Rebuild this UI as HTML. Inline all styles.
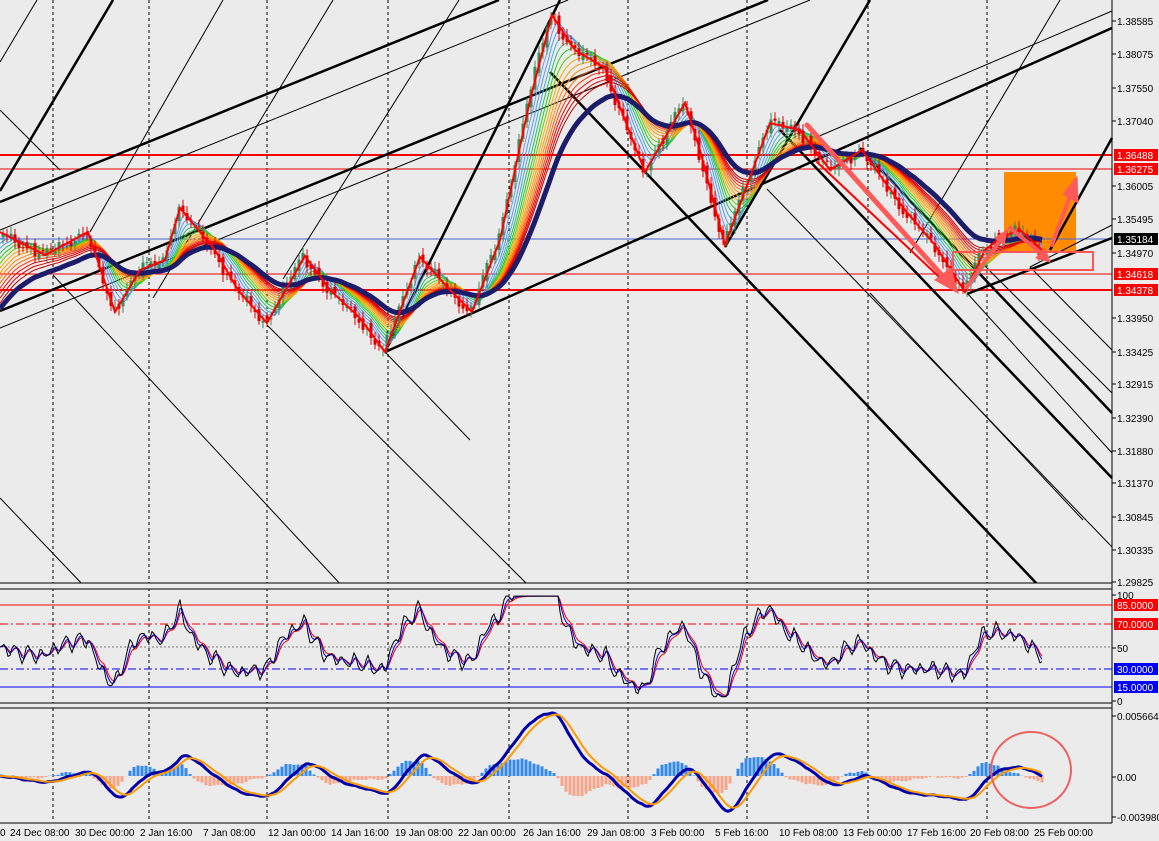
<!DOCTYPE html>
<html><head><meta charset="utf-8"><style>
html,body{margin:0;padding:0;background:#ebebeb;overflow:hidden}
svg{display:block;font-family:"Liberation Sans",sans-serif}
</style></head><body>
<svg id="s" width="1159" height="841" xmlns="http://www.w3.org/2000/svg">
<rect width="1159" height="841" fill="#ebebeb"/>
<g id="grid" stroke="#000" stroke-width="1" stroke-dasharray="3,3">
<line x1="53" y1="0" x2="53" y2="822"/><line x1="149" y1="0" x2="149" y2="822"/><line x1="267" y1="0" x2="267" y2="822"/><line x1="388" y1="0" x2="388" y2="822"/><line x1="509" y1="0" x2="509" y2="822"/><line x1="628" y1="0" x2="628" y2="822"/><line x1="747" y1="0" x2="747" y2="822"/><line x1="868" y1="0" x2="868" y2="822"/><line x1="987" y1="0" x2="987" y2="822"/>
</g>
<rect x="1004" y="172" width="72" height="81" fill="#ff8c00"/>
<line x1="0" y1="155" x2="1112" y2="155" stroke="#f00" stroke-width="2"/>
<line x1="0" y1="169" x2="1112" y2="169" stroke="#e00" stroke-width="1"/>
<line x1="0" y1="239" x2="1112" y2="239" stroke="#4466cc" stroke-width="1"/>
<line x1="0" y1="274" x2="1112" y2="274" stroke="#e00" stroke-width="1"/>
<line x1="0" y1="290" x2="1112" y2="290" stroke="#f00" stroke-width="2"/>
<g id="tl" stroke="#000" fill="none">
<g stroke-width="2.5">
<line x1="0" y1="191" x2="113" y2="0"/>
<line x1="0" y1="202" x2="499" y2="0"/>
<line x1="0" y1="311" x2="768" y2="0"/>
<line x1="385" y1="352" x2="1112" y2="28"/>
<line x1="967" y1="294" x2="1112" y2="238"/>
<line x1="385" y1="352" x2="560" y2="0"/>
<line x1="725" y1="247" x2="870" y2="0"/>
<line x1="1050" y1="250" x2="1112" y2="138"/>
<line x1="550" y1="72" x2="1038" y2="585"/>
<line x1="860" y1="148" x2="1112" y2="413"/>
<line x1="780" y1="130" x2="1112" y2="478"/>
</g>
<g stroke-width="1">
<line x1="0" y1="230" x2="568" y2="0"/>
<line x1="0" y1="328" x2="810" y2="0"/>
<line x1="810" y1="140" x2="1112" y2="11"/>
<line x1="1030" y1="267" x2="1112" y2="225"/>
<line x1="0" y1="62" x2="37" y2="0"/>
<line x1="90" y1="232" x2="223" y2="0"/>
<line x1="153" y1="298" x2="333" y2="0"/>
<line x1="283" y1="279" x2="459" y2="0"/>
<line x1="910" y1="253" x2="1060" y2="0"/>
<line x1="0" y1="498" x2="85" y2="587"/>
<line x1="53" y1="275" x2="343" y2="587"/>
<line x1="267" y1="325" x2="530" y2="587"/>
<line x1="767" y1="189" x2="1112" y2="547"/>
<line x1="870" y1="293" x2="1083" y2="520"/>
<line x1="967" y1="293" x2="1112" y2="453"/>
<line x1="985" y1="266" x2="1112" y2="393"/>
<line x1="1030" y1="267" x2="1112" y2="350"/>
<line x1="0" y1="110" x2="60" y2="170"/>
<line x1="385" y1="352" x2="470" y2="440"/>
</g>
</g>
<g id="chart"></g>
<g stroke="#ff5a5a" fill="none" stroke-linecap="round">
<line x1="817" y1="162" x2="953" y2="290" stroke="#f00" stroke-width="2"/>
<line x1="807" y1="125" x2="948" y2="282" stroke-width="5"/><polygon points="935,280 958,293 951,268" fill="#ff5a5a" stroke-width="1"/>
<line x1="967" y1="287" x2="1003" y2="236" stroke-width="4"/><polygon points="995,238 1007,230 1004,245" fill="#ff5a5a" stroke-width="1"/>
<line x1="1010" y1="228" x2="1045" y2="256" stroke-width="4"/><polygon points="1036,258 1050,262 1045,248" fill="#ff5a5a" stroke-width="1"/>
<line x1="1052" y1="245" x2="1073" y2="188" stroke-width="4"/><polygon points="1063,194 1077,177 1078,203" fill="#ff5a5a" stroke-width="1"/>
</g>
<rect x="953" y="252" width="140" height="18" fill="none" stroke="#f55" stroke-width="2"/>
<rect x="0" y="583" width="1112" height="6" fill="#ebebeb"/>
<line x1="0" y1="583" x2="1112" y2="583" stroke="#000"/>
<line x1="0" y1="589" x2="1112" y2="589" stroke="#000"/>
<rect x="0" y="703" width="1112" height="5" fill="#ebebeb"/>
<line x1="0" y1="703" x2="1112" y2="703" stroke="#000"/>
<line x1="0" y1="708" x2="1112" y2="708" stroke="#000"/>
<line x1="0" y1="823" x2="1112" y2="823" stroke="#000"/>
<line x1="0" y1="605" x2="1112" y2="605" stroke="#f00"/>
<line x1="0" y1="624" x2="1112" y2="624" stroke="#f00" stroke-dasharray="8,3,2,3"/>
<line x1="0" y1="647" x2="1112" y2="647" stroke="#777" stroke-dasharray="2,2"/>
<line x1="0" y1="669" x2="1112" y2="669" stroke="#00f" stroke-dasharray="8,3,2,3"/>
<line x1="0" y1="687" x2="1112" y2="687" stroke="#00f"/>
<g id="osc"></g>
<ellipse cx="1031" cy="770" rx="40" ry="38" fill="none" stroke="#f06060" stroke-width="2"/>
<line x1="1112" y1="0" x2="1112" y2="823" stroke="#000"/>
<g id="axis" font-size="10" fill="#000"></g>
<g font-size="10" fill="#000">
<text x="0" y="836">0</text><text x="10" y="836">24 Dec 08:00</text><text x="75" y="836">30 Dec 00:00</text><text x="140" y="836">2 Jan 16:00</text><text x="203" y="836">7 Jan 08:00</text><text x="268" y="836">12 Jan 00:00</text><text x="331" y="836">14 Jan 16:00</text><text x="395" y="836">19 Jan 08:00</text><text x="458" y="836">22 Jan 00:00</text><text x="523" y="836">26 Jan 16:00</text><text x="587" y="836">29 Jan 08:00</text><text x="651" y="836">3 Feb 00:00</text><text x="715" y="836">5 Feb 16:00</text><text x="779" y="836">10 Feb 08:00</text><text x="843" y="836">13 Feb 00:00</text><text x="907" y="836">17 Feb 16:00</text><text x="970" y="836">20 Feb 08:00</text><text x="1034" y="836">25 Feb 00:00</text>
</g>
</svg>
<script>
var NS="http://www.w3.org/2000/svg";
function el(p,t,a){var e=document.createElementNS(NS,t);for(var k in a)e.setAttribute(k,a[k]);p.appendChild(e);return e;}
var zz=[[0,232],[45,255],[88,232],[115,312],[140,270],[165,260],[180,208],[215,250],[238,290],[267,323],[305,256],[330,290],[360,318],[385,352],[420,257],[450,290],[472,312],[500,240],[530,100],[552,15],[575,50],[605,68],[645,172],[685,103],[700,150],[725,245],[770,123],[800,130],[830,170],[862,150],[905,210],[935,245],[965,292],[985,250],[1000,238],[1020,230],[1042,250]];
var N=1043,p=[];
for(var x=0;x<N;x++){var i=0;while(i<zz.length-2&&zz[i+1][0]<x)i++;var a=zz[i],b=zz[i+1];var t=(x-a[0])/(b[0]-a[0]);t=Math.max(0,Math.min(1,t));p.push(a[1]+(b[1]-a[1])*t*1+Math.sin(x*0.9)*2+Math.sin(x*0.37)*3);}
function ema(s,n,seed){var k=2/(n+1),r=[],v=seed===undefined?s[0]:seed;for(var i=0;i<s.length;i++){v=v+(s[i]-v)*k;r.push(v);}return r;}
function path(s,f){var d="";for(var i=0;i<s.length;i+=2){d+=(d?"L":"M")+i+","+f(s[i]).toFixed(1);}return d;}
var g=document.getElementById("chart");
var cols=["#6699ff","#5599ee","#44aadd","#33bb66","#22cc22","#66cc00","#ffaa00","#ff9900","#ff8800","#ff6600","#ff3300","#ee0000","#dd0000","#cc0000"];
for(var j=0;j<cols.length;j++){var e=ema(p,10+j*6,240+j*5);el(g,"path",{d:path(e,function(v){return v}),stroke:cols[j],"stroke-width":1,fill:"none"});}
for(var x=3;x<N-2;x+=4){var o=p[x-2]+Math.sin(x*2.3)*3,c=p[x+2]+Math.sin(x*1.7)*3;var hi=Math.min(o,c)-3-Math.abs(Math.sin(x))*4,lo=Math.max(o,c)+3+Math.abs(Math.cos(x))*4;var col=c<o?"#3a8a5a":"#dd0000";
el(g,"line",{x1:x,y1:hi,x2:x,y2:lo,stroke:col,"stroke-width":1});el(g,"rect",{x:x-1.5,y:Math.min(o,c),width:3,height:Math.max(1,Math.abs(c-o)),fill:col});}
var ma=ema(p,110,310);el(g,"path",{d:path(ma,function(v){return v}),stroke:"#1c1c6b","stroke-width":5,fill:"none"});
var zd="";zz.forEach(function(q,i){zd+=(i?"L":"M")+q[0]+","+q[1];});el(g,"path",{d:zd,stroke:"#f00","stroke-width":2,fill:"none"});
var os=document.getElementById("osc");
var e20=ema(p,40);var raw=p.map(function(v,i){return Math.max(3,Math.min(98,50+(e20[i]-v)*0.9+Math.sin(i*0.5)*6));});
var b1=ema(raw,6),r1=ema(raw,10);
function oy(v){return 700-v*1.06;}
el(os,"path",{d:path(r1,oy),stroke:"#f00",fill:"none","stroke-width":1});
el(os,"path",{d:path(b1,oy),stroke:"#00f",fill:"none","stroke-width":1});
el(os,"path",{d:path(raw,oy),stroke:"#000",fill:"none","stroke-width":1});
var np=p.map(function(v){return -v});var f=ema(np,24),sl=ema(np,52);var m=f.map(function(v,i){return v-sl[i]});var sg=ema(m,14);
function my(v){return Math.max(713,Math.min(818,776-v*1.25));}
for(var x=2;x<N;x+=4){var h=(m[x]-sg[x])*2.5;h=Math.max(-22,Math.min(30,h));el(os,"rect",{x:x-1.5,y:h>0?776-h:776,width:3,height:Math.abs(h),fill:h>0?"#3388ee":"#f4a58a"});}
el(os,"path",{d:path(m,my),stroke:"#0000aa",fill:"none","stroke-width":3});
el(os,"path",{d:path(sg,my),stroke:"#ff9900",fill:"none","stroke-width":2});
var ax=document.getElementById("axis");
var lab=[["1.38585",21],["1.38075",54],["1.37550",88],["1.37040",121],["1.36005",186],["1.35495",219],["1.34970",253],["1.33950",318],["1.33425",352],["1.32915",384],["1.32390",418],["1.31880",451],["1.31370",483],["1.30845",517],["1.30335",550],["1.29825",582],["100",595],["50",648],["0",701],["0.0056647",716],["0.00",777],["-0.003980",817]];
lab.forEach(function(l){el(ax,"line",{x1:1112,y1:l[1],x2:1116,y2:l[1],stroke:"#000"});var t=el(ax,"text",{x:1117,y:l[1]+4});t.textContent=l[0];});
var box=[["1.36488",155,"#f00"],["1.36275",169,"#f00"],["1.35184",239,"#000"],["1.34618",274,"#f00"],["1.34378",290,"#f00"],["85.0000",605,"#f00"],["70.0000",624,"#f00"],["30.0000",669,"#00f"],["15.0000",687,"#00f"]];
box.forEach(function(l){el(ax,"rect",{x:1114,y:l[1]-6,width:44,height:12,fill:l[2]});var t=el(ax,"text",{x:1117,y:l[1]+4,fill:"#fff"});t.textContent=l[0];});
</script>
</body></html>
